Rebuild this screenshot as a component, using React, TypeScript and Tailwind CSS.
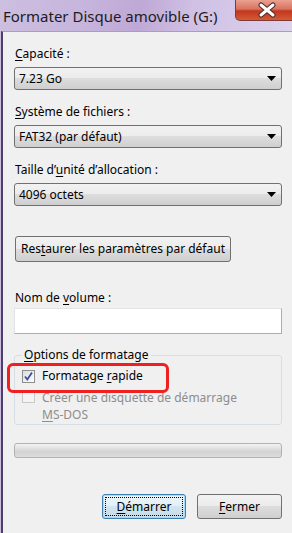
const font = "font-['Segoe_UI','Noto_Sans',sans-serif]"

function Arrow() {
  return (
    <svg width="9" height="5" viewBox="0 0 9 5" className="shrink-0">
      <path d="M0 0H9L4.5 5Z" fill="#000" />
    </svg>
  )
}

function Combo({ value }: { value: string }) {
  return (
    <div className="h-[23px] w-full flex items-center justify-between pl-[4px] pr-[5px] rounded-[3px] border border-[#707070] bg-[linear-gradient(#f2f2f2_0%,#ebebeb_50%,#dddddd_50%,#cfcfcf_100%)] text-[12px] text-black leading-none">
      <span>{value}</span>
      <Arrow />
    </div>
  )
}

function Label({ children, top }: { children: React.ReactNode; top: string }) {
  return <div className={`${top} h-[16px] leading-[16px] text-[12px] text-black pl-[1px] mb-[5px]`}>{children}</div>
}

function U({ children }: { children: React.ReactNode }) {
  return <span className="underline underline-offset-[2px]">{children}</span>
}

export default function App() {
  return (
    <div className={`${font} relative w-[292px] h-[533px] overflow-hidden flex flex-col bg-[#c9bcdd]`}>
      {/* Title bar */}
      <div className="relative h-[31px] shrink-0 bg-[linear-gradient(100deg,#cdbfe0_0%,#c6b4dc_30%,#bfa8d6_48%,#cfc0e4_65%,#dcd2ec_100%)]">
        <div className="pl-[3px] pt-[6px] text-[15px] leading-[20px] text-[#1c1c1c]">Formater Disque amovible (G:)</div>
        <div className="absolute left-[235px] top-0 w-[64px] h-[21px] rounded-bl-[5px] border border-t-0 border-[#7c3a3a] bg-[linear-gradient(#eaa192_0%,#d9735e_45%,#c2371d_55%,#d45a34_100%)] flex items-center justify-center">
          <svg width="22" height="16" viewBox="0 0 22 16" className="-ml-[1px]">
            <path d="M5 3L17 13M17 3L5 13" stroke="#4a2a2a" strokeWidth="5" strokeLinecap="round" />
            <path d="M5 3L17 13M17 3L5 13" stroke="#fff" strokeWidth="3" strokeLinecap="round" />
          </svg>
        </div>
      </div>

      {/* Client area */}
      <div className="flex-1 ml-px border-l-2 border-[#4d3d6c] border-t border-t-[#a89fb8] bg-[#f0f0f0] pl-[11px] pr-[10px] pt-[14px] flex flex-col">
        <Label top="mt-0"><U>C</U>apacité :</Label>
        <Combo value="7.23 Go" />
        <Label top="mt-[14px]"><U>S</U>ystème de fichiers :</Label>
        <Combo value="FAT32 (par défaut)" />
        <Label top="mt-[14px]">Taille d’<U>u</U>nité d’allocation :</Label>
        <Combo value="4096 octets" />

        <button className="mt-[30px] ml-px w-[216px] h-[26px] rounded-[3px] border border-[#707070] bg-[linear-gradient(#f2f2f2_0%,#ebebeb_50%,#dddddd_50%,#cfcfcf_100%)] text-[12px] text-black leading-none">
          Res<U>t</U>aurer les paramètres par défaut
        </button>

        <div className="mt-[28px] h-[16px] leading-[16px] text-[12px] text-black pl-[1px]">Nom de <U>v</U>olume :</div>
        <div className="mt-[2px] h-[26px] w-full border border-[#abadb3] border-t-[#e3e3e3] border-l-[#e2e3ea] bg-white" />

        <fieldset className="mt-[13px] h-[78px] rounded-[3px] border border-[#d5dfe5] px-0 pb-[3px]">
          <legend className="ml-[7px] px-[2px] text-[12px] leading-[16px] text-black">
            <U>O</U>ptions de formatage
          </legend>
          <div className="mt-[5px] ml-[7px] flex items-center h-[16px]">
            <span className="w-[13px] h-[13px] border border-[#8e8f8f] bg-[linear-gradient(135deg,#dcdcdc,#ffffff)] flex items-center justify-center">
              <svg width="11" height="11" viewBox="0 0 11 11">
                <path d="M2 5.5L4.3 8.5L9 1.5" stroke="#3c4fa0" strokeWidth="1.8" fill="none" />
              </svg>
            </span>
            <span className="ml-[7px] text-[12px] text-black">Formatage <U>r</U>apide</span>
          </div>
          <div className="mt-[5px] ml-[7px] flex items-start">
            <span className="mt-[1px] w-[13px] h-[13px] border border-[#c9c9c9] bg-[#f4f4f4] shrink-0" />
            <span className="ml-[7px] text-[12px] leading-[17px] text-[#8d8d8d]">
              Créer une disquette de démarrage<br />
              <U>M</U>S-DOS
            </span>
          </div>
        </fieldset>

        <div className="mt-[18px] h-[15px] w-full rounded-[3px] border border-[#b2b2b2] bg-[linear-gradient(#f3f3f3_0%,#e3e3e3_30%,#d3d3d3_60%,#dcdcdc_100%)]" />

        <div className="mt-[36px] flex justify-end gap-[11px]">
          <button className="w-[84px] h-[25px] rounded-[3px] border border-[#3c7fb1] shadow-[inset_0_0_0_1px_#a9dbf6] bg-[linear-gradient(#ecf6fb_0%,#e2eff6_50%,#d2e5ef_50%,#c6dbe7_100%)] p-[2px]">
            <span className="flex items-center justify-center w-full h-full border border-dotted border-black text-[12px] text-black leading-none">
              <U>D</U>émarrer
            </span>
          </button>
          <button className="w-[85px] h-[25px] rounded-[3px] border border-[#707070] bg-[linear-gradient(#f2f2f2_0%,#ebebeb_50%,#dddddd_50%,#cfcfcf_100%)] text-[12px] text-black leading-none">
            <U>F</U>ermer
          </button>
        </div>
      </div>

      {/* Red highlight */}
      <div className="absolute left-[7px] top-[363px] w-[162px] h-[30px] rounded-[6px] border-[3px] border-[#f02020]" />
    </div>
  )
}
